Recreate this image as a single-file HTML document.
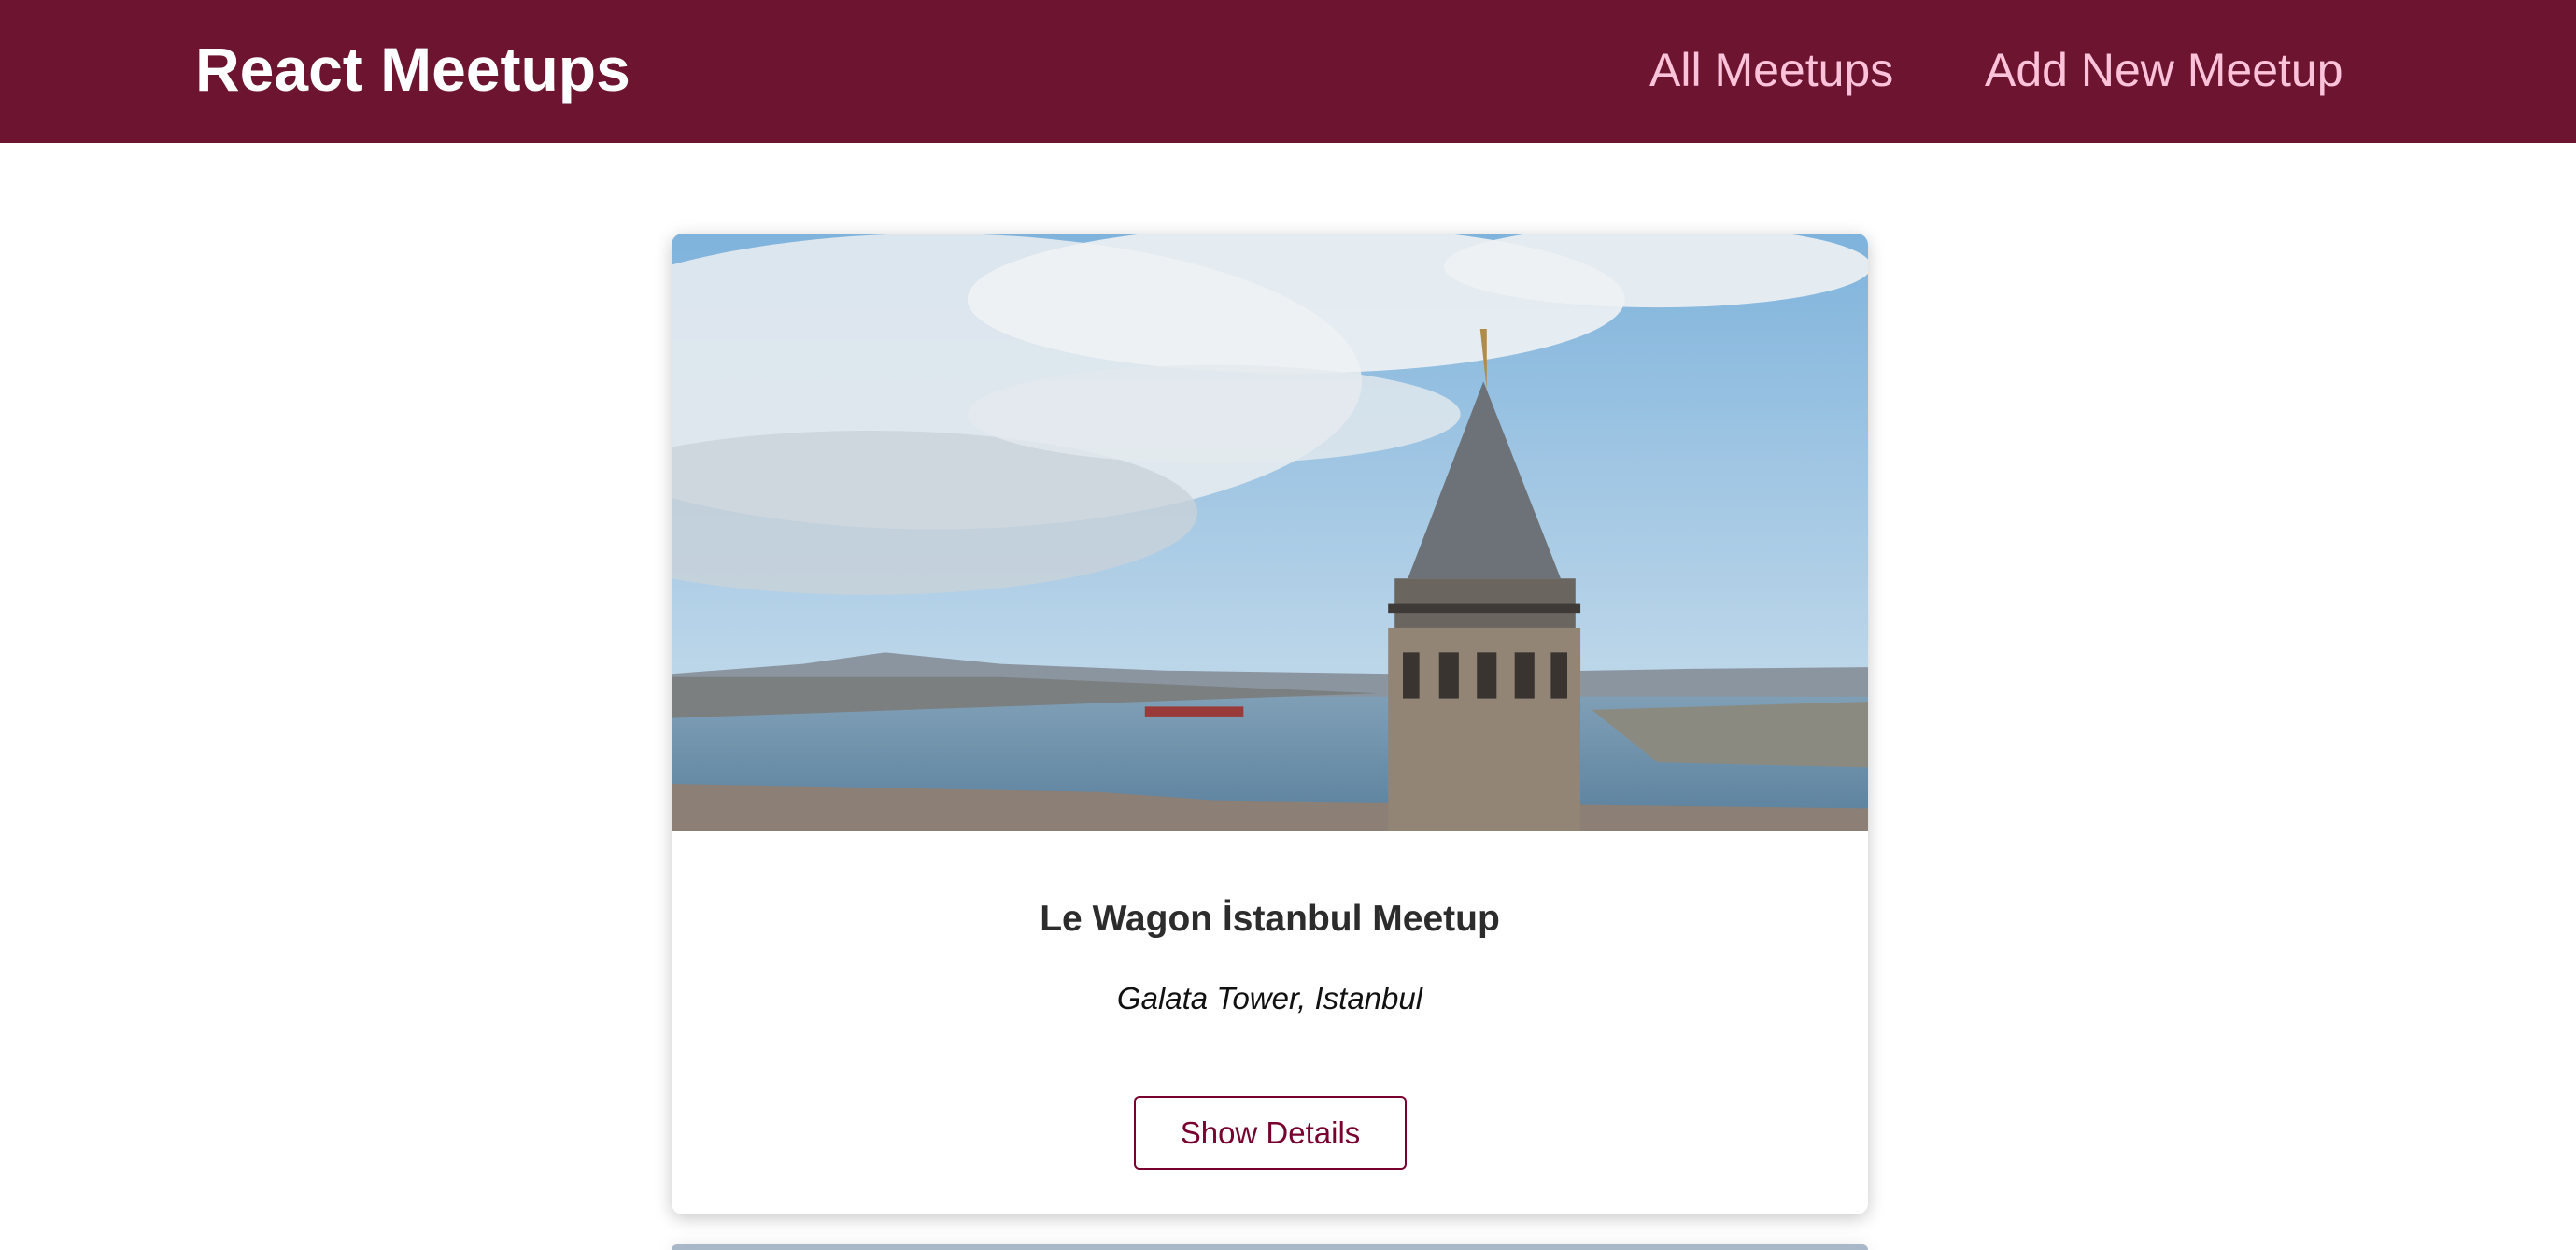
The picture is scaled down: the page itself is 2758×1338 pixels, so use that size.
<!DOCTYPE html>
<html><head><meta charset="utf-8"><style>
html,body{margin:0;padding:0;background:#fff;width:2758px;height:1338px;overflow:hidden;font-family:"Liberation Sans",sans-serif;position:relative}
header{position:absolute;left:0;top:0;width:2758px;height:153px;background:#6d1430}
.logo{position:absolute;left:209px;top:34px;font-size:66px;font-weight:bold;color:#fff;line-height:80px}
.nav{position:absolute;top:40px;font-size:50px;color:#fbc2d9;line-height:70px}
.card{position:absolute;left:719px;top:250px;width:1281px;height:1050px;background:#fff;border-radius:12px;box-shadow:0 4px 18px rgba(0,0,0,.22);overflow:hidden}
.card2{top:1332px;height:6px;background:#a9b8c8;border-radius:12px 12px 0 0}
.img{position:absolute;left:0;top:0;width:1281px;height:640px}
.t{position:absolute;left:0;width:100%;text-align:center}
.title{top:712px;font-size:39px;font-weight:bold;color:#2c2c2c}
.addr{top:800px;font-size:33px;font-style:italic;color:#111}
.btn{position:absolute;left:495px;top:923px;width:288px;height:75px;border:2px solid #77002e;border-radius:6px;color:#77002e;font-size:33px;text-align:center;line-height:75px}
</style></head><body>
<header><div class="logo">React Meetups</div>
<div class="nav" style="left:1766px">All Meetups</div>
<div class="nav" style="left:2125px">Add New Meetup</div></header>
<div class="card">
<svg class="img" viewBox="0 0 728 364" preserveAspectRatio="none">
<defs><linearGradient id="sky" x1="0" y1="0" x2="0" y2="1"><stop offset="0" stop-color="#7fb3dc"/><stop offset="1" stop-color="#d3e3ee"/></linearGradient>
<linearGradient id="w" x1="0" y1="0" x2="0" y2="1"><stop offset="0" stop-color="#7f9fb6"/><stop offset="1" stop-color="#5f84a0"/></linearGradient></defs>
<rect width="728" height="364" fill="url(#sky)"/>
<ellipse cx="160" cy="90" rx="260" ry="90" fill="#e6ebef" opacity=".9"/>
<ellipse cx="120" cy="170" rx="200" ry="50" fill="#c9d2da" opacity=".8"/>
<ellipse cx="380" cy="40" rx="200" ry="45" fill="#eef2f4" opacity=".9"/>
<ellipse cx="600" cy="20" rx="130" ry="25" fill="#eef2f4" opacity=".9"/>
<ellipse cx="330" cy="110" rx="150" ry="30" fill="#e4eaee" opacity=".8"/>
<path d="M0 268 L80 262 L130 255 L200 262 L300 266 L440 268 L560 266 L620 265 L728 264 L728 285 L0 290Z" fill="#8a95a0"/>
<rect x="0" y="282" width="728" height="70" fill="url(#w)"/>
<path d="M0 270 L200 270 L430 280 L0 295Z" fill="#7c7f80"/>
<path d="M560 290 L728 285 L728 325 L600 322Z" fill="#8b8a80"/>
<path d="M0 335 L260 340 L330 345 L728 350 L728 364 L0 364Z" fill="#8c7f75"/>
<rect x="288" y="288" width="60" height="6" fill="#9a3b3b"/>
<path d="M492 58 L496 58 L496 95 Z" fill="#b08c4a"/>
<path d="M494 90 L448 210 L541 210 Z" fill="#6c7278"/>
<rect x="440" y="210" width="110" height="30" fill="#6a655e"/>
<rect x="436" y="240" width="117" height="124" fill="#928576"/>
<g fill="#3a3430"><rect x="445" y="255" width="10" height="28"/><rect x="467" y="255" width="12" height="28"/><rect x="490" y="255" width="12" height="28"/><rect x="513" y="255" width="12" height="28"/><rect x="535" y="255" width="10" height="28"/></g>
<rect x="436" y="225" width="117" height="6" fill="#3e3a38"/>
</svg>
<div class="t title">Le Wagon İstanbul Meetup</div>
<div class="t addr">Galata Tower, Istanbul</div>
<div class="btn">Show Details</div>
</div>
<div class="card card2"></div>
</body></html>
